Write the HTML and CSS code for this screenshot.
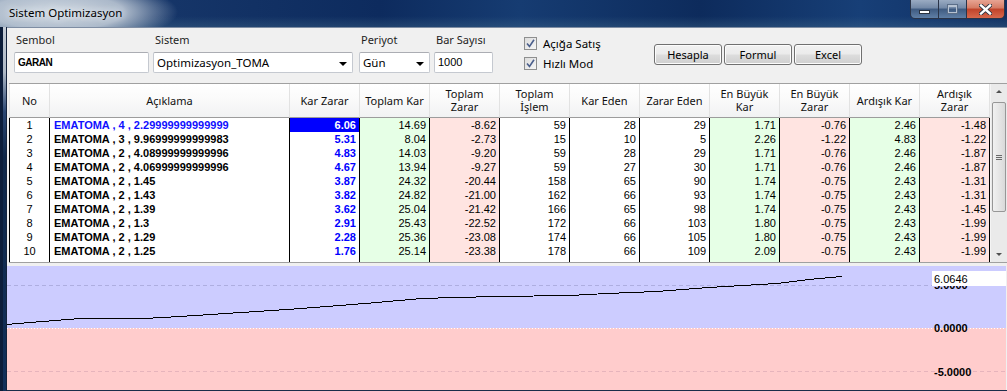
FILE: index.html
```html
<!DOCTYPE html>
<html>
<head>
    <title>Sistem Optimizasyon</title>
    <link rel="stylesheet" href="styles.css">
</head>
<body>
<div class="window">
    <div class="titlebar">
        <span class="title">Sistem Optimizasyon</span>
        <div class="caption-buttons">
            <span class="cap-btn cap-min"><span class="min-glyph"></span></span>
            <span class="cap-btn cap-max"><span class="max-glyph"></span></span>
            <span class="cap-btn cap-close">
                <svg width="13" height="11" viewBox="0 0 13 11">
                    <path d="M2 1.5 L11 9.5 M11 1.5 L2 9.5" stroke="#2b3340" stroke-width="4.2" stroke-linecap="square"/>
                    <path d="M2 1.5 L11 9.5 M11 1.5 L2 9.5" stroke="#fff" stroke-width="2.4" stroke-linecap="square"/>
                </svg>
            </span>
        </div>
    </div>

    <div class="frame">
        <div class="frame-left"></div>
        <div class="client">
            <div class="toolbar">
                <div class="field field-sembol">
                    <span class="field-label">Sembol</span>
                    <div class="textbox textbox-bold">GARAN</div>
                </div>
                <div class="field field-sistem">
                    <span class="field-label">Sistem</span>
                    <div class="textbox combo">Optimizasyon_TOMA<span class="combo-arrow"></span></div>
                </div>
                <div class="field field-periyot">
                    <span class="field-label">Periyot</span>
                    <div class="textbox combo">Gün<span class="combo-arrow"></span></div>
                </div>
                <div class="field field-bar">
                    <span class="field-label">Bar Sayısı</span>
                    <div class="textbox textbox-num">1000</div>
                </div>

                <div class="checks">
                    <label class="check"><span class="check-box"><svg width="9" height="9" viewBox="0 0 9 9"><path d="M1 4.5 L3.5 7.5 L8 0.8" fill="none" stroke="#4b5f8c" stroke-width="1.6"/></svg></span>Açığa Satış</label>
                    <label class="check"><span class="check-box"><svg width="9" height="9" viewBox="0 0 9 9"><path d="M1 4.5 L3.5 7.5 L8 0.8" fill="none" stroke="#4b5f8c" stroke-width="1.6"/></svg></span>Hızlı Mod</label>
                </div>

                <div class="buttons">
                    <button class="btn">Hesapla</button>
                    <button class="btn">Formul</button>
                    <button class="btn">Excel</button>
                </div>
            </div>

            <div class="grid-wrap">
                <div class="grid" id="grid">
                    <div class="hcell hfirst">No</div>
                    <div class="hcell">Açıklama</div>
                    <div class="hcell">Kar Zarar</div>
                    <div class="hcell">Toplam Kar</div>
                    <div class="hcell">Toplam<br>Zarar</div>
                    <div class="hcell">Toplam<br>İşlem</div>
                    <div class="hcell">Kar Eden</div>
                    <div class="hcell">Zarar Eden</div>
                    <div class="hcell">En Büyük<br>Kar</div>
                    <div class="hcell">En Büyük<br>Zarar</div>
                    <div class="hcell">Ardışık Kar</div>
                    <div class="hcell">Ardışık<br>Zarar</div>
                </div>
                <div class="scrollbar">
                    <span class="sb-arrow sb-up"></span>
                    <div class="sb-thumb"><span class="sb-grip"></span></div>
                    <span class="sb-arrow sb-down"></span>
                </div>
            </div>

            <div class="chart">
                <svg width="999" height="124" viewBox="0 0 999 124">
                    <rect x="0" y="0" width="999" height="62" fill="#ccccff"/>
                    <rect x="0" y="62" width="999" height="62" fill="#ffcccc"/>
                    <line x1="0" y1="19.5" x2="999" y2="19.5" stroke="#aeaee0" stroke-dasharray="4 3"/>
                    <line x1="0" y1="105.5" x2="999" y2="105.5" stroke="#e6b4bc" stroke-dasharray="4 3"/>
                    <line x1="0" y1="62.5" x2="999" y2="62.5" stroke="#ffffff" stroke-dasharray="1 2"/>
                    <polyline fill="none" stroke="#000" stroke-width="1" shape-rendering="crispEdges"
                              points="0,58.5 10,57.5 24,56.5 35,55.5 49,54.5 60,53.5 75,52.5 137,52.5 156,51.5 172,50.5 189,49.5 204,48.5 219,47.5 234,46.5 250,45.5 265,44.5 280,43.5 294,42.5 306,41.5 320,40.5 333,39.5 345,38.5 358,37.5 370,36.5 381,35.5 392,34.5 404,33.5 415,32.5 447,31.5 492,30.5 563,29.5 600,27.5 650,25.5 702,21.5 735,19.5 770,17.5 802,13.5 835,10.5"/>
                    <text class="axis-label" x="927" y="23">5.0000</text>
                    <rect x="925" y="5" width="74" height="15" fill="#ffffff"/>
                    <text class="value-label" x="927" y="16.5">6.0646</text>
                    <text class="axis-label" x="927" y="66">0.0000</text>
                    <text class="axis-label" x="927" y="109.5">-5.0000</text>
                </svg>
            </div>
        </div>
    </div>
</div>

<script>
    const rows = [
        ['1', 'EMATOMA , 4 , 2.29999999999999', '6.06', '14.69', '-8.62', '59', '28', '29', '1.71', '-0.76', '2.46', '-1.48'],
        ['2', 'EMATOMA , 3 , 9.96999999999983', '5.31', '8.04', '-2.73', '15', '10', '5', '2.26', '-1.22', '4.83', '-1.22'],
        ['3', 'EMATOMA , 2 , 4.08999999999996', '4.83', '14.03', '-9.20', '59', '28', '29', '1.71', '-0.76', '2.46', '-1.87'],
        ['4', 'EMATOMA , 2 , 4.06999999999996', '4.67', '13.94', '-9.27', '59', '27', '30', '1.71', '-0.76', '2.46', '-1.87'],
        ['5', 'EMATOMA , 2 , 1.45', '3.87', '24.32', '-20.44', '158', '65', '90', '1.74', '-0.75', '2.43', '-1.31'],
        ['6', 'EMATOMA , 2 , 1.43', '3.82', '24.82', '-21.00', '162', '66', '93', '1.74', '-0.75', '2.43', '-1.31'],
        ['7', 'EMATOMA , 2 , 1.39', '3.62', '25.04', '-21.42', '166', '65', '98', '1.74', '-0.75', '2.43', '-1.45'],
        ['8', 'EMATOMA , 2 , 1.3', '2.91', '25.43', '-22.52', '172', '66', '103', '1.80', '-0.75', '2.43', '-1.99'],
        ['9', 'EMATOMA , 2 , 1.29', '2.28', '25.36', '-23.08', '174', '66', '105', '1.80', '-0.75', '2.43', '-1.99'],
        ['10', 'EMATOMA , 2 , 1.25', '1.76', '25.14', '-23.38', '178', '66', '109', '2.09', '-0.75', '2.43', '-1.99'],
        ['', '', '', '', '', '', '', '', '', '', '', '']
    ];
    const colClass = ['no', 'desc', 'kz', 'pos', 'neg', 'num', 'num', 'num', 'pos', 'neg', 'pos', 'neg'];

    const grid = document.getElementById('grid');
    rows.forEach((row, r) => {
        row.forEach((value, c) => {
            const cell = document.createElement('div');
            cell.className = 'cell ' + colClass[c];
            if (r === 0 && c === 1) cell.classList.add('current');
            if (r === 0 && c === 2) cell.classList.add('selected');
            cell.textContent = value;
            grid.appendChild(cell);
        });
    });
</script>
</body>
</html>
```

FILE: styles.css
```css
body {
    margin: 0;
    width: 1007px;
    height: 391px;
    overflow: hidden;
    background-color: #0e2447;
    font-family: "Liberation Sans", Arial, sans-serif;
}

.window {
    display: flex;
    flex-direction: column;
    height: 391px;
}

/* title bar */
.titlebar {
    height: 27px;
    display: flex;
    align-items: flex-start;
    background:
        radial-gradient(ellipse 120px 32px at 58px 12px, rgba(212, 220, 228, 0.97) 0%, rgba(190, 201, 214, 0.88) 55%, rgba(120, 145, 178, 0) 100%),
        linear-gradient(180deg, rgba(255, 255, 255, 0) 60%, rgba(70, 110, 140, 0.35) 100%),
        linear-gradient(90deg, #4f6b8f 0, #163669 150px, #0d2b5e 380px, #163c72 520px, #0d2b5c 700px, #173f77 860px, #0f2e62 1007px);
}

.title {
    padding: 5px 0 0 9px;
    font-family: "Noto Sans", sans-serif;
    font-size: 11.5px;
    line-height: 16px;
    color: #000;
    text-shadow: 0 0 6px #e8edf2, 0 0 10px #e8edf2;
}

.caption-buttons {
    margin-left: auto;
    margin-right: 2px;
    display: flex;
    height: 19px;
}

.cap-btn {
    box-sizing: border-box;
    height: 19px;
    display: flex;
    align-items: center;
    justify-content: center;
    border: 1px solid #2a3448;
    border-top: none;
}

.cap-min {
    width: 29px;
    border-radius: 0 0 0 5px;
    background: linear-gradient(180deg, #9aabc2 0, #7288a6 45%, #3e5a80 50%, #5f7fa6 100%);
}

.cap-max {
    width: 28px;
    border-left: none;
    background: linear-gradient(180deg, #9aabc2 0, #7288a6 45%, #3e5a80 50%, #5f7fa6 100%);
}

.cap-close {
    width: 38px;
    border-left: none;
    border-radius: 0 0 5px 0;
    background: linear-gradient(180deg, #e7a493 0, #d57a63 45%, #c0432a 50%, #d8684c 100%);
}

.min-glyph {
    width: 9px;
    height: 2px;
    margin-top: 5px;
    background-color: #fff;
    border: 1px solid #2b3340;
}

.max-glyph {
    width: 7px;
    height: 5px;
    border: 1px solid #b6c2d2;
    border-top-width: 2px;
    box-shadow: 0 0 0 1px #5b6e88;
}

/* window frame */
.frame {
    flex: 1;
    display: flex;
}

.frame-left {
    width: 8px;
    background: linear-gradient(180deg, #c3cbd5 0, #aeb9c6 45px, #2a4672 85px, #0f2748 130px, #12305a 100%);
    box-shadow: inset -1px 0 0 #14233d, inset 3px 0 0 #0c1d3a;
}

.client {
    flex: 1;
    display: flex;
    flex-direction: column;
    background-color: #f0f0f0;
    border-top: 1px solid #7e8da3;
}

/* toolbar */
.toolbar {
    height: 55px;
    display: flex;
    padding-left: 7px;
    font-family: "Noto Sans", sans-serif;
    font-size: 11px;
    color: #000;
}

.field {
    display: flex;
    flex-direction: column;
    padding-top: 5px;
}

.field-label {
    height: 14px;
    line-height: 14px;
    padding-left: 2px;
    margin-bottom: 5px;
    color: #1e1e1e;
}

.field-sembol { width: 135px; }
.field-sistem { width: 200px; margin-left: 4px; }
.field-periyot { width: 71px; margin-left: 6px; }
.field-bar { width: 59px; margin-left: 4px; }

.textbox {
    box-sizing: border-box;
    height: 21px;
    line-height: 19px;
    padding-left: 3px;
    background-color: #fff;
    border: 1px solid #c5c9d0;
    border-top-color: #abadb3;
    border-radius: 2px;
    font-size: 11.5px;
}

.textbox-bold,
.textbox-num {
    font-family: "Liberation Sans", Arial, sans-serif;
    font-size: 11px;
}

.textbox-bold {
    font-weight: bold;
    font-size: 10px;
    letter-spacing: -0.5px;
}

.combo {
    display: flex;
    align-items: center;
    justify-content: space-between;
    padding-right: 5px;
}

.combo-arrow {
    width: 0;
    height: 0;
    border-left: 4px solid transparent;
    border-right: 4px solid transparent;
    border-top: 4px solid #000;
    margin-top: 2px;
}

.checks {
    width: 110px;
    margin-left: 31px;
    padding-top: 9px;
    display: flex;
    flex-direction: column;
    gap: 7px;
}

.check {
    display: flex;
    align-items: center;
    gap: 6px;
    height: 13px;
    font-size: 11.5px;
}

.check-box {
    box-sizing: border-box;
    width: 13px;
    height: 13px;
    display: flex;
    align-items: center;
    justify-content: center;
    border: 1px solid #8e8f8f;
    background: linear-gradient(135deg, #dcdcdc 0, #f6f6f6 100%);
}

.buttons {
    margin-left: 20px;
    padding-top: 16px;
    display: flex;
    gap: 2px;
}

.btn {
    box-sizing: border-box;
    width: 68px;
    height: 21px;
    padding: 0;
    border: 1px solid #707070;
    border-radius: 3px;
    background: linear-gradient(180deg, #f2f2f2 0, #ebebeb 48%, #dddddd 52%, #cfcfcf 100%);
    box-shadow: inset 0 0 0 1px #fcfcfc;
    font-family: "Noto Sans", sans-serif;
    font-size: 11px;
    color: #000;
}

/* grid */
.grid-wrap {
    margin-left: 2px;
    height: 178px;
    display: flex;
    border-top: 1px solid #a0a0a0;
    border-bottom: 1px solid #a0a0a0;
}

.grid {
    width: 981px;
    height: 178px;
    overflow: hidden;
    display: grid;
    grid-template-columns: 41px 240px repeat(10, 70px);
    grid-template-rows: 34px;
    grid-auto-rows: 14px;
    background-color: #fff;
    font-size: 11px;
    color: #000;
}

.hcell {
    box-sizing: border-box;
    display: flex;
    align-items: center;
    justify-content: center;
    text-align: center;
    line-height: 13px;
    padding-bottom: 1px;
    border-right: 1px solid #e2e2e2;
    border-bottom: 1px solid #9c9c9c;
    background: linear-gradient(180deg, #ffffff 0, #fbfbfb 40%, #f1f2f3 100%);
    font-family: "Noto Sans", sans-serif;
    font-size: 11px;
    color: #111;
}

.hfirst {
    border-left: 1px solid #e2e2e2;
}

.cell {
    box-sizing: border-box;
    height: 14px;
    line-height: 14px;
    padding: 0 3px;
    border-right: 1px solid #000;
    white-space: nowrap;
    overflow: hidden;
    text-align: right;
}

.cell.no {
    border-left: 1px solid #000;
    text-align: center;
}

.cell.desc {
    text-align: left;
    padding-left: 4px;
    font-weight: bold;
}

.cell.desc.current {
    color: #1010ff;
}

.cell.kz {
    color: #0000ff;
    font-weight: bold;
}

.cell.kz.selected {
    background-color: #0000ff;
    color: #fff;
}

.cell.pos {
    background-color: #e6ffe6;
}

.cell.neg {
    background-color: #ffe4e1;
}

/* scrollbar */
.scrollbar {
    width: 16px;
    display: flex;
    flex-direction: column;
    align-items: center;
    background-color: #eaeaea;
    border-left: 1px solid #f4f4f4;
}

.sb-arrow {
    width: 0;
    height: 0;
    border-left: 3px solid transparent;
    border-right: 3px solid transparent;
}

.sb-up {
    margin-top: 6px;
    border-bottom: 3px solid #505050;
}

.sb-down {
    margin-top: auto;
    margin-bottom: 6px;
    border-top: 3px solid #505050;
}

.sb-thumb {
    box-sizing: border-box;
    width: 14px;
    height: 110px;
    margin-top: 9px;
    display: flex;
    align-items: center;
    justify-content: center;
    border: 1px solid #979797;
    border-radius: 2px;
    background: linear-gradient(90deg, #f1f1f1 0, #e6e6e6 50%, #d9d9d9 100%);
}

.sb-grip {
    width: 6px;
    height: 5px;
    background: repeating-linear-gradient(180deg, #6a6a6a 0, #6a6a6a 1px, transparent 1px, transparent 2px);
}

/* chart */
.chart {
    margin-top: 3px;
    height: 124px;
    border-bottom: 1px solid #1a2c4a;
}

.chart svg {
    display: block;
}

.axis-label {
    font-family: "Liberation Sans", Arial, sans-serif;
    font-size: 11px;
    font-weight: bold;
    fill: #000;
}

.value-label {
    font-family: "Liberation Sans", Arial, sans-serif;
    font-size: 11px;
    fill: #000;
}
```
